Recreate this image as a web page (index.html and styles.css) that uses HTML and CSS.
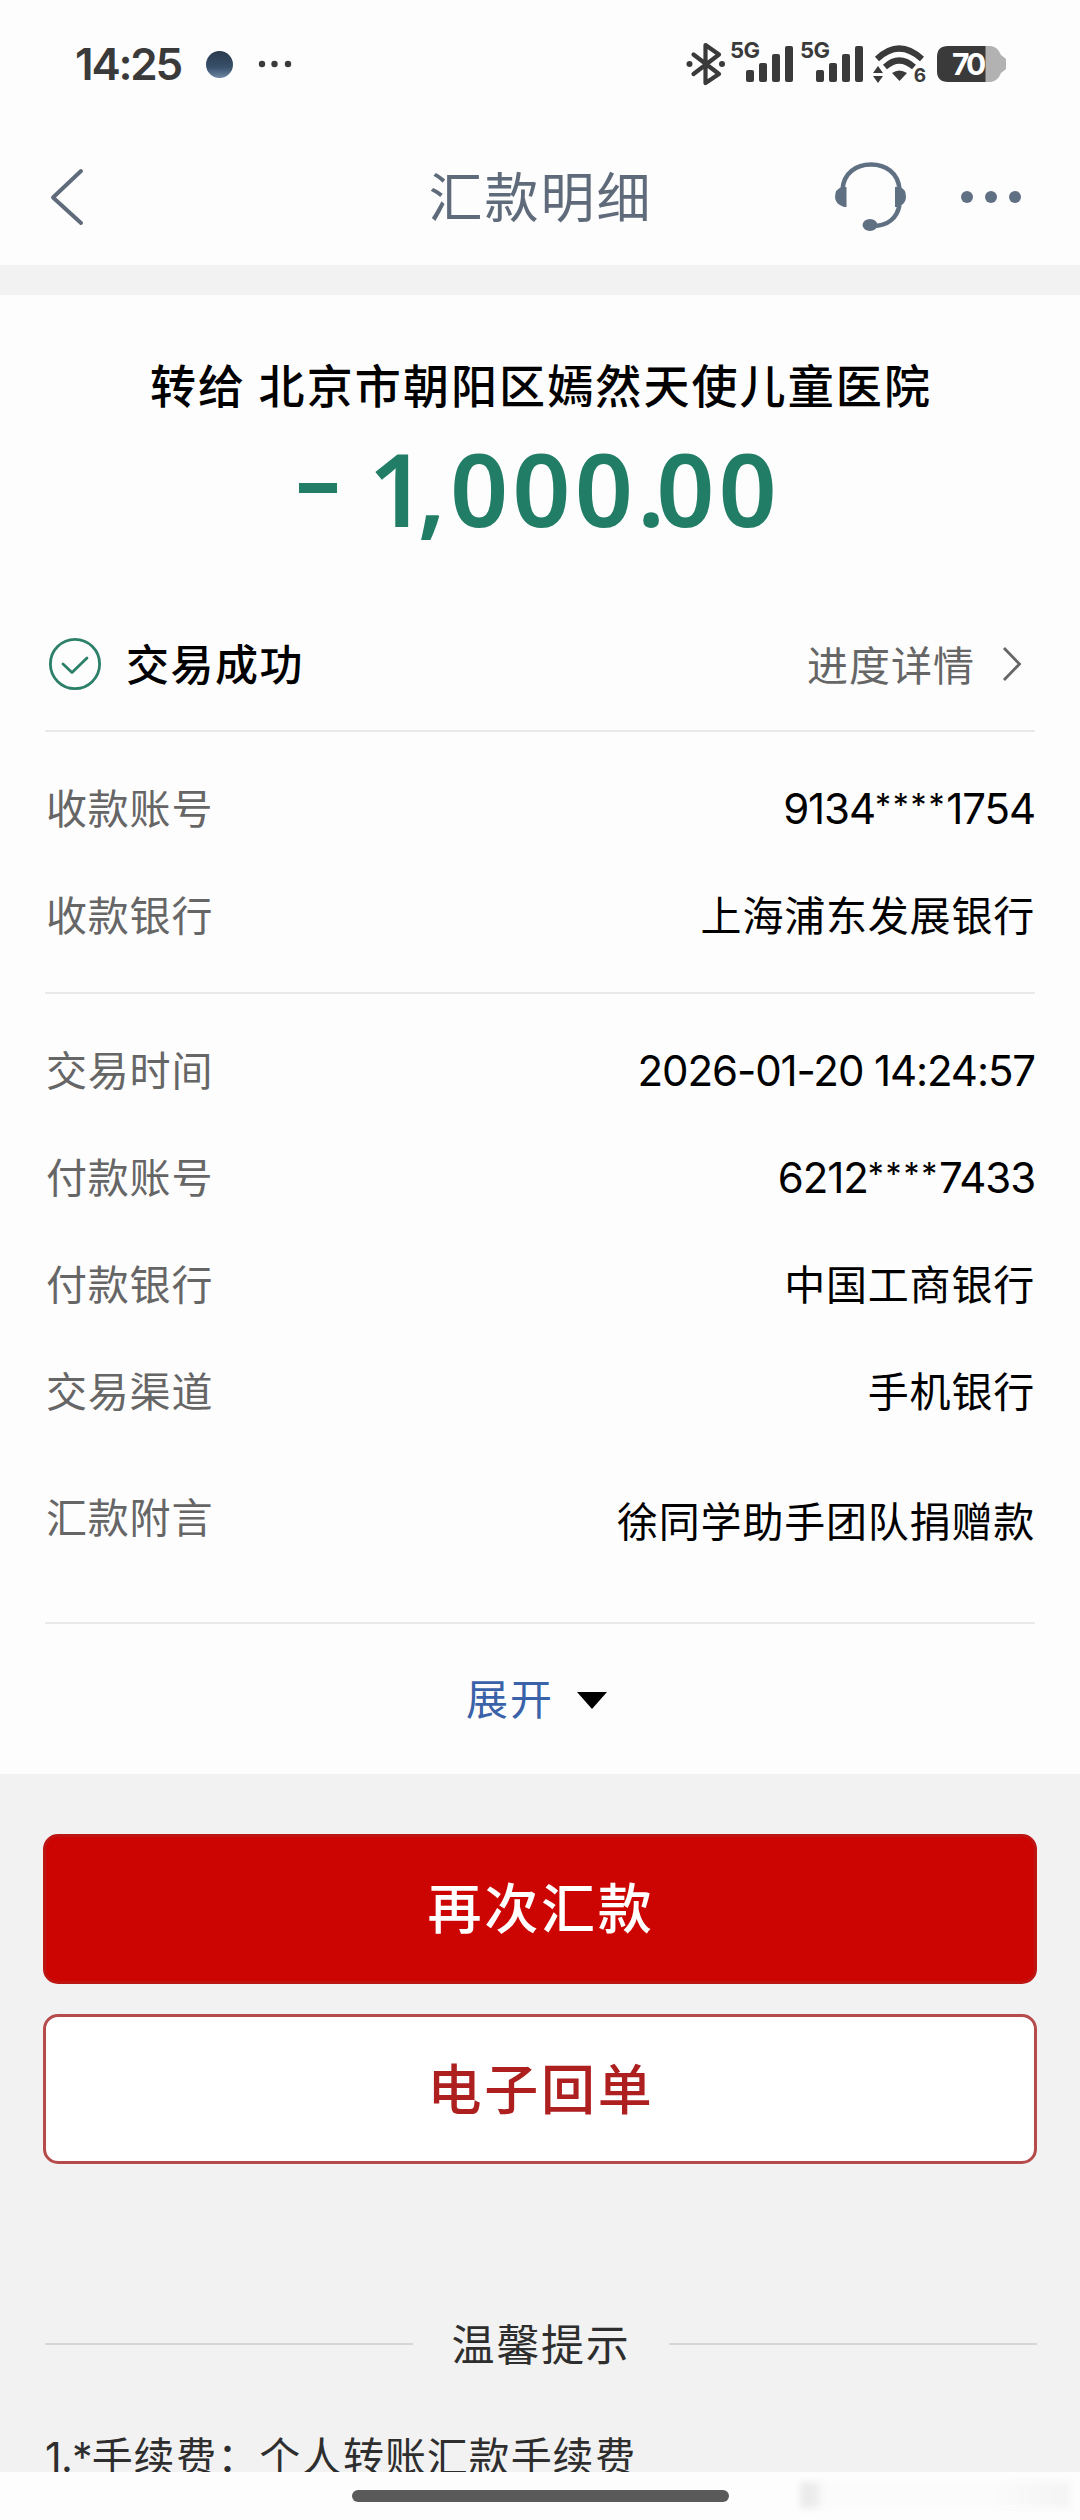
FILE: index.html
```
<!DOCTYPE html>
<html lang="zh-CN">
<head>
    <meta charset="UTF-8">
    <meta name="viewport" content="width=device-width, initial-scale=1.0">
    <title>汇款明细</title>
    <link rel="stylesheet" href="styles.css">
</head>
<body>
<div class="page">
    <!--状态栏-->
    <div class="status-bar">
        <span class="time">14:25</span>
        <span class="avatar"></span>
        <svg class="more-small" width="34" height="8" viewBox="0 0 34 8" fill="#3a3a3a">
            <circle cx="4" cy="4" r="3.2"/>
            <circle cx="16.500" cy="4" r="3.2"/>
            <circle cx="30" cy="4" r="3.2"/>
        </svg>
        <div class="status-icons">
            <svg width="40" height="44" viewBox="0 0 40 44" fill="none" stroke="#3a3a3a" stroke-width="4.200" stroke-linejoin="round" stroke-linecap="round">
                <path d="M7.500 12.500 L33 32 L19.500 41 V3 L33 12.500 L7.500 32"/>
                <circle cx="3.500" cy="22" r="3" fill="#3a3a3a" stroke="none"/>
                <circle cx="36" cy="22" r="3" fill="#3a3a3a" stroke="none"/>
            </svg>
            <div class="signal">
                <span>5G</span>
                <svg width="48" height="38" viewBox="0 0 48 38" fill="#3a3a3a">
                    <rect x="0" y="25" width="8" height="12" rx="2"/>
                    <rect x="13" y="18" width="8" height="19" rx="2"/>
                    <rect x="26" y="9" width="8" height="28" rx="2"/>
                    <rect x="39" y="1" width="8" height="36" rx="2"/>
                </svg>
            </div>
            <div class="signal">
                <span>5G</span>
                <svg width="48" height="38" viewBox="0 0 48 38" fill="#3a3a3a">
                    <rect x="0" y="25" width="8" height="12" rx="2"/>
                    <rect x="13" y="18" width="8" height="19" rx="2"/>
                    <rect x="26" y="9" width="8" height="28" rx="2"/>
                    <rect x="39" y="1" width="8" height="36" rx="2"/>
                </svg>
            </div>
            <div class="wifi">
                <svg width="52" height="38" viewBox="0 0 52 38" fill="none" stroke="#3a3a3a" stroke-width="6">
                    <path d="M4 14 Q26 -7 49 14"/>
                    <path d="M12 22 Q26 9 41 22"/>
                    <path d="M19 28 Q26 23 34 28 L26.500 36 Z" fill="#3a3a3a" stroke="none"/>
                    <path d="M0 28 L5 21 L10 28 Z M0 31 L5 38 L10 31 Z" fill="#3a3a3a" stroke="none"/>
                </svg>
                <span>6</span>
            </div>
            <div class="battery">
                <svg width="70" height="36" viewBox="0 0 70 36">
                    <path d="M48 0 H54 Q61 1 64 9 L69 13 V23 L64 27 Q61 35 54 36 H48 Z" fill="#b2b2b2"/>
                    <path d="M48.500 0 V36 H11 Q0 36 0 25 V11 Q0 0 11 0 Z" fill="#3a3a3a"/>
                </svg>
                <span>70</span>
            </div>
        </div>
    </div>

    <!--标题栏-->
    <div class="nav-bar">
        <svg class="back" width="34" height="60" viewBox="0 0 34 60" fill="none" stroke="#5f6b7a" stroke-width="4" stroke-linecap="round" stroke-linejoin="round">
            <path d="M31 4 L3 30.500 L31 56"/>
        </svg>
        <h1>汇款明细</h1>
        <div class="nav-actions">
            <svg width="74" height="72" viewBox="0 0 74 72" fill="none" stroke="#5f7083" stroke-width="4.500">
                <path d="M8.500 28 C10 12 22 3.500 37 3.500 C52 3.500 64 12 65.500 28"/>
                <path d="M65.500 44 C63 57 54 65 39 65"/>
                <path d="M12.500 26 V46 H10 Q1 43 1 36 Q1 28 8 26 Z M61 26 V46 H64 Q72 43 72 36 Q72 28 66 26 Z" fill="#5f7083" stroke="none"/>
                <ellipse cx="36" cy="64" rx="7.500" ry="6" fill="#5f7083" stroke="none"/>
            </svg>
            <svg class="dots" width="62" height="14" viewBox="0 0 62 14" fill="#5f7083">
                <circle cx="7" cy="7" r="6"/>
                <circle cx="31" cy="7" r="6"/>
                <circle cx="55" cy="7" r="6"/>
            </svg>
        </div>
    </div>

    <div class="card">
        <div class="payee">转给 北京市朝阳区嫣然天使儿童医院</div>
        <div class="amount"><i></i><span><em>1</em>,000<em>.</em>00</span></div>

        <div class="result">
            <svg width="54" height="54" viewBox="0 0 54 54" fill="none" stroke="#2c8069" stroke-width="2.800">
                <circle cx="27" cy="27" r="24.600"/>
                <path d="M15 27 L24 35.500 L39 21" stroke-linecap="round" stroke-linejoin="round"/>
            </svg>
            <strong>交易成功</strong>
            <span>进度详情</span>
            <svg class="arrow" width="20" height="36" viewBox="0 0 20 36" fill="none" stroke="#666" stroke-width="2.800">
                <path d="M2 2 L17.500 18 L2 34"/>
            </svg>
        </div>

        <div class="group">
            <div class="row"><label>收款账号</label><span class="num">9134<em>****</em>1754</span></div>
            <div class="row"><label>收款银行</label><span>上海浦东发展银行</span></div>
        </div>

        <div class="group">
            <div class="row"><label>交易时间</label><span class="num">2026-01-20 14:24:57</span></div>
            <div class="row"><label>付款账号</label><span class="num">6212<em>****</em>7433</span></div>
            <div class="row"><label>付款银行</label><span>中国工商银行</span></div>
            <div class="row"><label>交易渠道</label><span>手机银行</span></div>
            <div class="row remark"><label>汇款附言</label><span>徐同学助手团队捐赠款</span></div>
        </div>

        <div class="expand">
            <span>展开</span>
            <i></i>
        </div>
    </div>

    <div class="buttons">
        <button class="btn primary">再次汇款</button>
        <button class="btn">电子回单</button>
    </div>

    <div class="tips">
        <div class="tips-title"><span>温馨提示</span></div>
        <p><b>1.*</b>手续费：个人转账汇款手续费</p>
    </div>

    <div class="home-bar"><i></i><span class="smudge"></span></div>
</div>
</body>
</html>
```

FILE: styles.css
```
* {
    box-sizing: border-box;
}

body, h1, p {
    margin: 0;
    padding: 0;
    font-weight: normal;
}

body {
    font-family: "Noto Sans CJK SC", sans-serif;
    color: #000;
    overflow: hidden;
}

svg {
    display: block;
    flex: none;
}

em {
    font-style: normal;
}

.page {
    display: flex;
    flex-direction: column;
    width: 1080px;
    height: 2520px;
    background: #f2f2f2;
}

/* 状态栏 */
.status-bar {
    display: flex;
    align-items: center;
    height: 128px;
    padding: 0 73px 0 75px;
    background: #fdfdfd;
    color: #3a3a3a;
    font-family: Inter, sans-serif;
}

.time {
    width: 131px;
    font-size: 44px;
    font-weight: 600;
    letter-spacing: -2.200px;
}

.avatar {
    width: 27px;
    height: 27px;
    margin-right: 25px;
    border-radius: 50%;
    background: linear-gradient(#2a3b4e, #38506a 60%, #6d86a3);
}

.status-icons {
    display: flex;
    align-items: center;
    margin-left: auto;
}

.signal {
    position: relative;
    width: 62px;
    margin-left: 8px;
    padding-left: 12px;
}

.signal span {
    position: absolute;
    left: -4px;
    top: -7px;
    font-size: 22px;
    line-height: 24px;
    font-weight: 700;
    letter-spacing: -0.5px;
}

.wifi {
    position: relative;
    margin-left: 7px;
}

.wifi span {
    position: absolute;
    right: -1px;
    bottom: -3px;
    font-size: 19px;
    line-height: 20px;
    font-weight: 700;
}

.battery {
    position: relative;
    margin-left: 12px;
}

.battery span {
    position: absolute;
    left: 15px;
    top: 0;
    color: #fff;
    font-size: 30px;
    line-height: 36px;
    font-weight: 700;
    letter-spacing: -3px;
}

/* 标题栏 */
.nav-bar {
    display: grid;
    grid-template-columns: 1fr auto 1fr;
    align-items: center;
    height: 137px;
    padding: 0 58px 0 50px;
    background: #fdfdfd;
}

.nav-bar h1 {
    padding: 0 0 4px 9px;
    color: #5f6b7a;
    font-size: 54px;
    line-height: 80px;
    letter-spacing: 2px;
}

.nav-actions {
    display: flex;
    align-items: center;
    justify-content: flex-end;
    gap: 52px;
}

/* 明细 */
.card {
    height: 1479px;
    margin-top: 30px;
    padding: 53px 45px 0;
    background: #fdfdfd;
}

.payee {
    padding-left: 2px;
    font-size: 46px;
    line-height: 70px;
    font-weight: 500;
    letter-spacing: 2.100px;
    text-align: center;
}

.amount {
    display: flex;
    align-items: center;
    justify-content: center;
    height: 140px;
    color: #217d65;
    font: 600 102px/140px "Noto Sans", sans-serif;
    letter-spacing: 4px;
}

.amount i {
    width: 38px;
    height: 10px;
    margin-right: 31px;
    background: #217d65;
}

.amount em {
    letter-spacing: -9px;
}

.result {
    display: flex;
    align-items: center;
    height: 174px;
    padding: 40px 13px 0 3px;
    border-bottom: 2px solid #e9e9e9;
}

.result strong {
    margin-left: 24px;
    padding-bottom: 4px;
    font-size: 43px;
    font-weight: 500;
    letter-spacing: 1.500px;
}

.result span {
    margin-left: auto;
    padding-bottom: 3px;
    color: #666;
    font-size: 41px;
    letter-spacing: 1px;
}

.result .arrow {
    margin-left: 27px;
}

.group {
    padding: 23px 0;
    border-bottom: 2px solid #e9e9e9;
}

.row {
    display: flex;
    align-items: center;
    justify-content: space-between;
    height: 107px;
    font-size: 41px;
    letter-spacing: 0.800px;
}

.row label,
.row span {
    padding-bottom: 5px;
}

.row label {
    padding-left: 1px;
    color: #666;
}

.row .num {
    padding-bottom: 0;
    font-family: Inter, sans-serif;
    font-size: 42px;
    line-height: 50px;
    letter-spacing: -1.100px;
}

.num em {
    font-size: 32px;
    line-height: 1;
    letter-spacing: 1.800px;
    vertical-align: 7px;
}

.remark {
    height: 154px;
    padding-bottom: 2px;
}

.remark label {
    padding-bottom: 12px;
}

.expand {
    display: flex;
    align-items: center;
    justify-content: center;
    height: 148px;
    padding-right: 7px;
    color: #3a62a8;
    font-size: 42px;
    letter-spacing: 2px;
}

.expand span {
    padding-bottom: 3px;
}

.expand i {
    margin: 4px 0 0 23px;
    border: 15px solid transparent;
    border-top: 17px solid #000;
    border-bottom: 0;
}

/* 按钮 */
.buttons {
    display: flex;
    flex-direction: column;
    gap: 30px;
    padding: 60px 43px 0;
}

.btn {
    height: 150px;
    padding: 0 0 5px 2px;
    border: 3px solid #b74a4a;
    border-radius: 15px;
    background: #fff;
    color: #ae2020;
    font: 500 54px "Noto Sans CJK SC", sans-serif;
    letter-spacing: 2.800px;
}

.btn.primary {
    padding-bottom: 8px;
    border-color: #bd1512;
    background: #cc0402;
    color: #fff;
}

/* 温馨提示 */
.tips {
    flex: 1;
    min-height: 0;
    padding: 148px 43px 0 45px;
    overflow: hidden;
    color: #2e2e2e;
}

.tips-title {
    display: flex;
    align-items: center;
    gap: 38px;
    height: 64px;
    font-size: 43px;
    letter-spacing: 1.800px;
}

.tips-title span {
    padding-bottom: 5px;
}

.tips-title:before,
.tips-title:after {
    content: "";
    flex: 1;
    height: 2px;
    background: #d6d6d6;
}

.tips p {
    margin-top: 46px;
    font-size: 41px;
    line-height: 64px;
    letter-spacing: 0.900px;
    white-space: nowrap;
}

.tips b {
    font-family: Inter, sans-serif;
    font-weight: 400;
    letter-spacing: -0.800px;
}

.home-bar {
    position: relative;
    display: flex;
    justify-content: center;
    height: 48px;
    padding-top: 18px;
    background: #fdfdfd;
}

.home-bar i {
    width: 377px;
    height: 12px;
    border-radius: 6px;
    background: #5a5a5a;
}

.smudge {
    position: absolute;
    right: 10px;
    top: 10px;
    width: 270px;
    height: 26px;
    background: linear-gradient(90deg, #ebebeb 0 14px, #fbfbfb 24px 70%, #f4f4f4);
    filter: blur(3px);
}
```
